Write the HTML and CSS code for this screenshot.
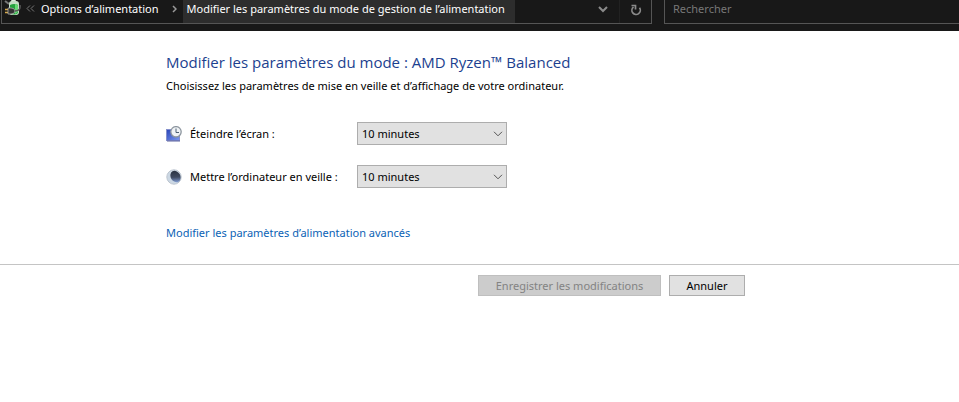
FILE: index.html
```
<!DOCTYPE html>
<html lang="fr">
<head>
  <meta charset="UTF-8" />
  <meta name="viewport" content="width=device-width, initial-scale=1.0" />
  <title>Modifier les paramètres du mode de gestion de l’alimentation</title>
  <link rel="stylesheet" href="styles.css">
</head>
<body>
  <header class="topbar">
    <nav class="address">
      <svg class="app-icon" width="18" height="17" viewBox="0 0 18 17">
        <path d="M2 1l4 3" stroke="#777" stroke-width="2"/>
        <rect x="8" y="0" width="5" height="3" rx="1" fill="#d8e8d8"/>
        <rect x="6" y="1" width="10" height="14" rx="3" fill="#c4dcc4"/>
        <path d="M7 5q4-2 8 0v8q-4 3-8 0z" fill="#23a03c"/>
        <path d="M12 4q3 0 3 2v6l-3 2z" fill="#65d873"/>
        <path d="M2 9.500h4M2 12.500h4" stroke="#d6a94a" stroke-width="1.500"/>
        <path d="M5 8h3q4 0 4 3t-4 3H5z" fill="#333" stroke="#aaa" stroke-width=".8"/>
        <path d="M12 11q6 0 5-6" fill="none" stroke="#555" stroke-width="1.500"/>
      </svg>
      <svg class="overflow" width="9" height="7" viewBox="0 0 9 7" fill="none" stroke="#777">
        <path d="M4 .5L1 3.500l3 3M8 .5l-3 3 3 3"/>
      </svg>
      <a class="crumb" href="#">Options d’alimentation</a>
      <svg class="separator" width="5" height="8" viewBox="0 0 5 8" fill="none" stroke="#999" stroke-width="1.500">
        <path d="M1 1l3 3-3 3"/>
      </svg>
      <a class="crumb current" href="#">Modifier les paramètres du mode de gestion de l’alimentation</a>
      <button class="tool history" type="button" aria-label="Historique">
        <svg width="10" height="7" viewBox="0 0 10 7" fill="none" stroke="#8a8a8a" stroke-width="2">
          <path d="M1 1l4 4 4-4"/>
        </svg>
      </button>
      <button class="tool refresh" type="button" aria-label="Actualiser">
        <svg width="12" height="12" viewBox="0 0 12 12" fill="none" stroke="#8a8a8a" stroke-width="1.700">
          <path d="M9.500 3.800A4.200 4.200 0 1 1 3.500 3"/>
          <path d="M1.500 1.500h4V5.500"/>
        </svg>
      </button>
    </nav>
    <input class="search" type="text" placeholder="Rechercher" aria-label="Rechercher" />
  </header>

  <form>
    <main class="content">
      <h1>Modifier les paramètres du mode : AMD Ryzen™ Balanced</h1>
      <p class="intro">Choisissez les paramètres de mise en veille et d’affichage de votre ordinateur.</p>

      <div class="settings">
        <div class="setting">
          <svg width="16" height="16" viewBox="0 0 16 16">
            <defs>
              <linearGradient id="screen" x1="0" y1="0" x2="1" y2="1">
                <stop offset="0" stop-color="#2944b8"/>
                <stop offset="1" stop-color="#7c9af0"/>
              </linearGradient>
            </defs>
            <rect x=".5" y="3.500" width="13" height="11" fill="url(#screen)" stroke="#8590cc"/>
            <path d="M1 15h13" stroke="#5a62a0"/>
            <circle cx="10" cy="5.800" r="5.200" fill="#f0f3f6" stroke="#8d969f" stroke-width="1.300"/>
            <path d="M10 2.500v4h3" fill="none" stroke="#4c6072"/>
          </svg>
          <label for="screenOff">Éteindre l’écran :</label>
          <div class="dropdown">
            <select id="screenOff">
              <option>10 minutes</option>
              <option>15 minutes</option>
              <option>Jamais</option>
            </select>
            <svg class="arrow" width="10" height="6" viewBox="0 0 10 6" fill="none" stroke="#555">
              <path d="M1 .8l4 4 4-4"/>
            </svg>
          </div>
        </div>
        <div class="setting">
          <svg width="16" height="16" viewBox="0 0 16 16">
            <defs>
              <linearGradient id="moon" x1=".7" y1="0" x2=".3" y2="1">
                <stop offset="0" stop-color="#2a3240"/>
                <stop offset=".55" stop-color="#3f4a60"/>
                <stop offset="1" stop-color="#86a3dc"/>
              </linearGradient>
            </defs>
            <circle cx="8" cy="8" r="7.200" fill="#ccd8e4" stroke="#bcc5cf"/>
            <ellipse cx="9.500" cy="7.500" rx="4.800" ry="6" fill="url(#moon)" transform="rotate(-30 9.500 7.500)"/>
          </svg>
          <label for="sleep">Mettre l’ordinateur en veille :</label>
          <div class="dropdown">
            <select id="sleep">
              <option>10 minutes</option>
              <option>15 minutes</option>
              <option>Jamais</option>
            </select>
            <svg class="arrow" width="10" height="6" viewBox="0 0 10 6" fill="none" stroke="#555">
              <path d="M1 .8l4 4 4-4"/>
            </svg>
          </div>
        </div>
      </div>

      <a class="advanced" href="#">Modifier les paramètres d’alimentation avancés</a>
    </main>

    <footer class="actions">
      <button class="btn save" type="submit" disabled>Enregistrer les modifications</button>
      <button class="btn cancel" type="button">Annuler</button>
    </footer>
  </form>
</body>
</html>
```
FILE: styles.css
```
* {
  box-sizing: border-box;
}
body {
  margin: 0;
  background: #fff;
  color: #000;
  font-family: "Segoe UI", "Noto Sans", sans-serif;
  font-size: 11px;
  line-height: 16px;
}
svg {
  display: block;
  flex: none;
}
a {
  text-decoration: none;
}
button, input, select {
  font: inherit;
  border-radius: 0;
}
.topbar {
  display: flex;
  gap: 12px;
  height: 31px;
  padding: 0 0 7px 1px;
  background: #181818;
}
.address {
  flex: none;
  display: flex;
  width: 651px;
  border: 1px solid #555;
  border-top: 0;
}
.app-icon {
  margin-left: 1px;
}
.overflow {
  margin: 5px 0 0 5px;
}
.crumb {
  padding: 1px 4px 6px;
  color: #fff;
  white-space: nowrap;
}
.overflow + .crumb {
  margin-left: 2px;
}
.separator {
  margin: 5px 6px 0 9px;
}
.current {
  padding-right: 10px;
  background: #2d2d2d;
}
.tool {
  display: flex;
  align-items: center;
  justify-content: center;
  width: 32px;
  padding: 0 0 4px;
  background: none;
  border: 0;
}
.history {
  margin-left: auto;
}
.refresh {
  border-left: 1px solid #222;
}
.search {
  flex: 1;
  min-width: 0;
  padding: 0 8px 5px;
  background: #181818;
  border: 1px solid #555;
  border-width: 0 0 1px 1px;
  color: #fff;
}
.search::placeholder {
  color: #777;
  opacity: 1;
}
.content {
  padding: 20px 16px 23px 166px;
}
h1 {
  margin: 0;
  color: #1c3f8f;
  font-family: "Segoe UI", "Open Sans", sans-serif;
  font-size: 15px;
  font-weight: 400;
  line-height: 22px;
}
.intro {
  margin: 5px 0 28px;
}
.settings {
  display: grid;
  gap: 20px;
  margin-bottom: 37px;
}
.setting {
  display: grid;
  grid-template-columns: 16px 159px 150px;
  column-gap: 8px;
  align-items: center;
}
.setting label {
  white-space: nowrap;
}
.dropdown {
  position: relative;
}
.dropdown select {
  display: block;
  width: 100%;
  height: 23px;
  padding: 0 20px 0 4px;
  appearance: none;
  background: #e1e1e1;
  border: 1px solid #adadad;
  color: #000;
}
.arrow {
  position: absolute;
  top: 9px;
  right: 4px;
  pointer-events: none;
}
.advanced {
  color: #0b62b5;
}
.actions {
  display: flex;
  gap: 8px;
  padding: 10px 16px 10px 478px;
  border-top: 1px solid #c4c4c4;
}
.btn {
  height: 21px;
  padding: 0;
  background: #e1e1e1;
  border: 1px solid #adadad;
  color: #000;
  line-height: 16px;
  white-space: nowrap;
}
.save {
  width: 183px;
}
.cancel {
  width: 76px;
}
.btn:disabled {
  background: #ccc;
  border-color: #bfbfbf;
  color: #838383;
}
```
